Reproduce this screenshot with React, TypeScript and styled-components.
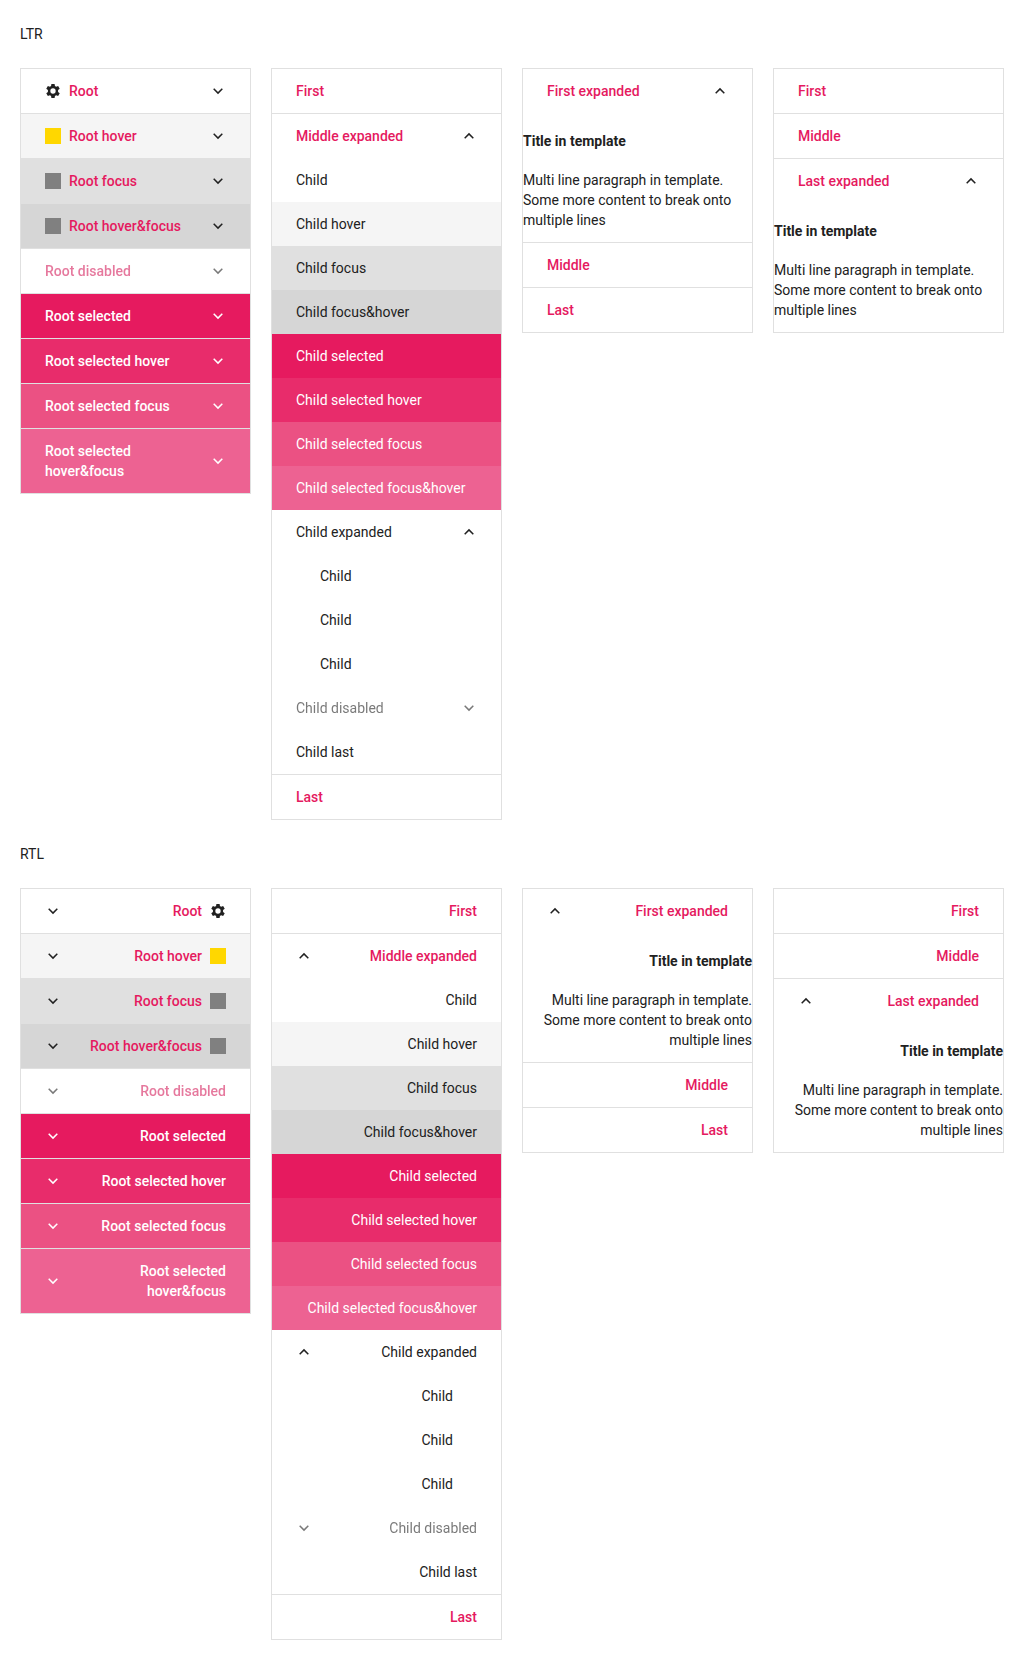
import React from 'react';
import styled, { createGlobalStyle, css } from 'styled-components';

type Tone = 'plain' | 'hover' | 'focus' | 'focusHover' | 'selected' | 'selectedHover' | 'selectedFocus' | 'selectedFocusHover';

const surfaces: Record<Tone, string> = {
  plain: '#ffffff',
  hover: '#f5f5f5',
  focus: '#e0e0e0',
  focusHover: '#d6d6d6',
  selected: '#e61a5f',
  selectedHover: '#e82c6b',
  selectedFocus: '#eb5183',
  selectedFocusHover: '#ed6292',
};

const GlobalStyle = createGlobalStyle`
  body {
    margin: 0;
    background: #ffffff;
    color: #212121;
    font-family: Roboto, 'Liberation Sans', sans-serif;
    font-size: 14px;
    line-height: 20px;
  }
`;

const Page = styled.main`
  display: flex;
  flex-direction: column;
  gap: 24px;
  padding: 24px 20px 20px;
`;

const Heading = styled.div`
  font-weight: 400;
`;

const Section = styled.section`
  display: flex;
  flex-direction: column;
  gap: 24px;
`;

const Columns = styled.div`
  display: grid;
  grid-template-columns: repeat(4, 1fr);
  gap: 20px;
  align-items: start;
`;

const Panel = styled.ul`
  margin: 0;
  padding: 0;
  list-style: none;
  border: 1px solid #e0e0e0;
`;

const RootItem = styled.li`
  & + & {
    border-top: 1px solid #e0e0e0;
  }
`;

const Group = styled.ul`
  margin: 0;
  padding: 0;
  list-style: none;
`;

const Link = styled.div<{ $tone: Tone; $root?: boolean; $level?: number; $disabled?: boolean }>`
  display: flex;
  align-items: center;
  gap: 8px;
  padding-block: 12px;
  padding-inline: ${(p) => 24 * (p.$level ?? 1)}px 24px;
  background: ${(p) => surfaces[p.$tone]};
  color: ${(p) => (p.$tone.startsWith('selected') ? '#ffffff' : p.$root ? '#e51a5f' : '#212121')};
  font-weight: ${(p) => (p.$root ? 500 : 400)};
  ${(p) =>
    p.$disabled &&
    css`
      opacity: 0.6;
      filter: grayscale(0.1);
    `}
`;

const Arrow = styled.svg<{ $light: boolean }>`
  width: 16px;
  height: 16px;
  flex: none;
  margin-inline-start: auto;
  color: ${(p) => (p.$light ? '#ffffff' : '#212121')};
`;

const Gear = styled.svg`
  width: 16px;
  height: 16px;
  flex: none;
  color: #212121;
`;

const Swatch = styled.span<{ $color: string }>`
  width: 16px;
  height: 16px;
  flex: none;
  background: ${(p) => p.$color};
`;

const Template = styled.div`
  padding: 18px 0 12px;
`;

const TemplateTitle = styled.h4`
  margin: 0 0 19px;
  font-size: 14px;
  font-weight: 700;
`;

const TemplateText = styled.p`
  margin: 0;
`;

interface EntryProps {
  text: string;
  tone?: Tone;
  arrow?: 'up' | 'down';
  icon?: React.ReactNode;
  disabled?: boolean;
  root?: boolean;
  level?: number;
}

function Entry({ text, tone = 'plain', arrow, icon, disabled, root, level }: EntryProps) {
  return (
    <Link $tone={tone} $root={root} $level={level} $disabled={disabled}>
      {icon}
      <span>{text}</span>
      {arrow && (
        <Arrow viewBox="0 0 16 16" $light={tone.startsWith('selected')} aria-hidden="true">
          <path
            d={arrow === 'down' ? 'M3.7 5.8 8 10.1l4.3-4.3' : 'M3.7 10.2 8 5.9l4.3 4.3'}
            fill="none"
            stroke="currentColor"
            strokeWidth="1.5"
          />
        </Arrow>
      )}
    </Link>
  );
}

function GearIcon() {
  return (
    <Gear viewBox="0 0 24 24" aria-hidden="true">
      <path
        fill="currentColor"
        fillRule="evenodd"
        d="M9.6 1.5h4.8l.5 3.1 1.8 1 3-1.2 2.4 4.2-2.5 1.9v3l2.5 1.9-2.4 4.2-3-1.2-1.8 1-.5 3.1H9.6l-.5-3.1-1.8-1-3 1.2-2.4-4.2 2.5-1.9v-3L1.9 8.6l2.4-4.2 3 1.2 1.8-1zM12 8a4 4 0 1 0 0 8 4 4 0 0 0 0-8z"
      />
    </Gear>
  );
}

const rootEntries: EntryProps[] = [
  { text: 'Root', icon: <GearIcon /> },
  { text: 'Root hover', tone: 'hover', icon: <Swatch $color="#ffd700" /> },
  { text: 'Root focus', tone: 'focus', icon: <Swatch $color="#808080" /> },
  { text: 'Root hover&focus', tone: 'focusHover', icon: <Swatch $color="#808080" /> },
  { text: 'Root disabled', disabled: true },
  { text: 'Root selected', tone: 'selected' },
  { text: 'Root selected hover', tone: 'selectedHover' },
  { text: 'Root selected focus', tone: 'selectedFocus' },
  { text: 'Root selected hover&focus', tone: 'selectedFocusHover' },
];

const childEntries: EntryProps[] = [
  { text: 'Child' },
  { text: 'Child hover', tone: 'hover' },
  { text: 'Child focus', tone: 'focus' },
  { text: 'Child focus&hover', tone: 'focusHover' },
  { text: 'Child selected', tone: 'selected' },
  { text: 'Child selected hover', tone: 'selectedHover' },
  { text: 'Child selected focus', tone: 'selectedFocus' },
  { text: 'Child selected focus&hover', tone: 'selectedFocusHover' },
  { text: 'Child expanded', arrow: 'up' },
  { text: 'Child', level: 2 },
  { text: 'Child', level: 2 },
  { text: 'Child', level: 2 },
  { text: 'Child disabled', arrow: 'down', disabled: true },
  { text: 'Child last' },
];

function TemplateContent() {
  return (
    <Template>
      <TemplateTitle>Title in template</TemplateTitle>
      <TemplateText>Multi line paragraph in template. Some more content to break onto multiple lines</TemplateText>
    </Template>
  );
}

function Direction({ title, dir }: { title: string; dir: 'ltr' | 'rtl' }) {
  return (
    <Section>
      <Heading>{title}</Heading>
      <Columns>
        <Panel dir={dir}>
          {rootEntries.map((e) => (
            <RootItem key={e.text}>
              <Entry root arrow="down" {...e} />
            </RootItem>
          ))}
        </Panel>
        <Panel dir={dir}>
          <RootItem><Entry root text="First" /></RootItem>
          <RootItem>
            <Entry root text="Middle expanded" arrow="up" />
            <Group>
              {childEntries.map((e, i) => (
                <li key={i}><Entry {...e} /></li>
              ))}
            </Group>
          </RootItem>
          <RootItem><Entry root text="Last" /></RootItem>
        </Panel>
        <Panel dir={dir}>
          <RootItem>
            <Entry root text="First expanded" arrow="up" />
            <TemplateContent />
          </RootItem>
          <RootItem><Entry root text="Middle" /></RootItem>
          <RootItem><Entry root text="Last" /></RootItem>
        </Panel>
        <Panel dir={dir}>
          <RootItem><Entry root text="First" /></RootItem>
          <RootItem><Entry root text="Middle" /></RootItem>
          <RootItem>
            <Entry root text="Last expanded" arrow="up" />
            <TemplateContent />
          </RootItem>
        </Panel>
      </Columns>
    </Section>
  );
}

export default function App() {
  return (
    <>
      <GlobalStyle />
      <Page>
        <Direction title="LTR" dir="ltr" />
        <Direction title="RTL" dir="rtl" />
      </Page>
    </>
  );
}
